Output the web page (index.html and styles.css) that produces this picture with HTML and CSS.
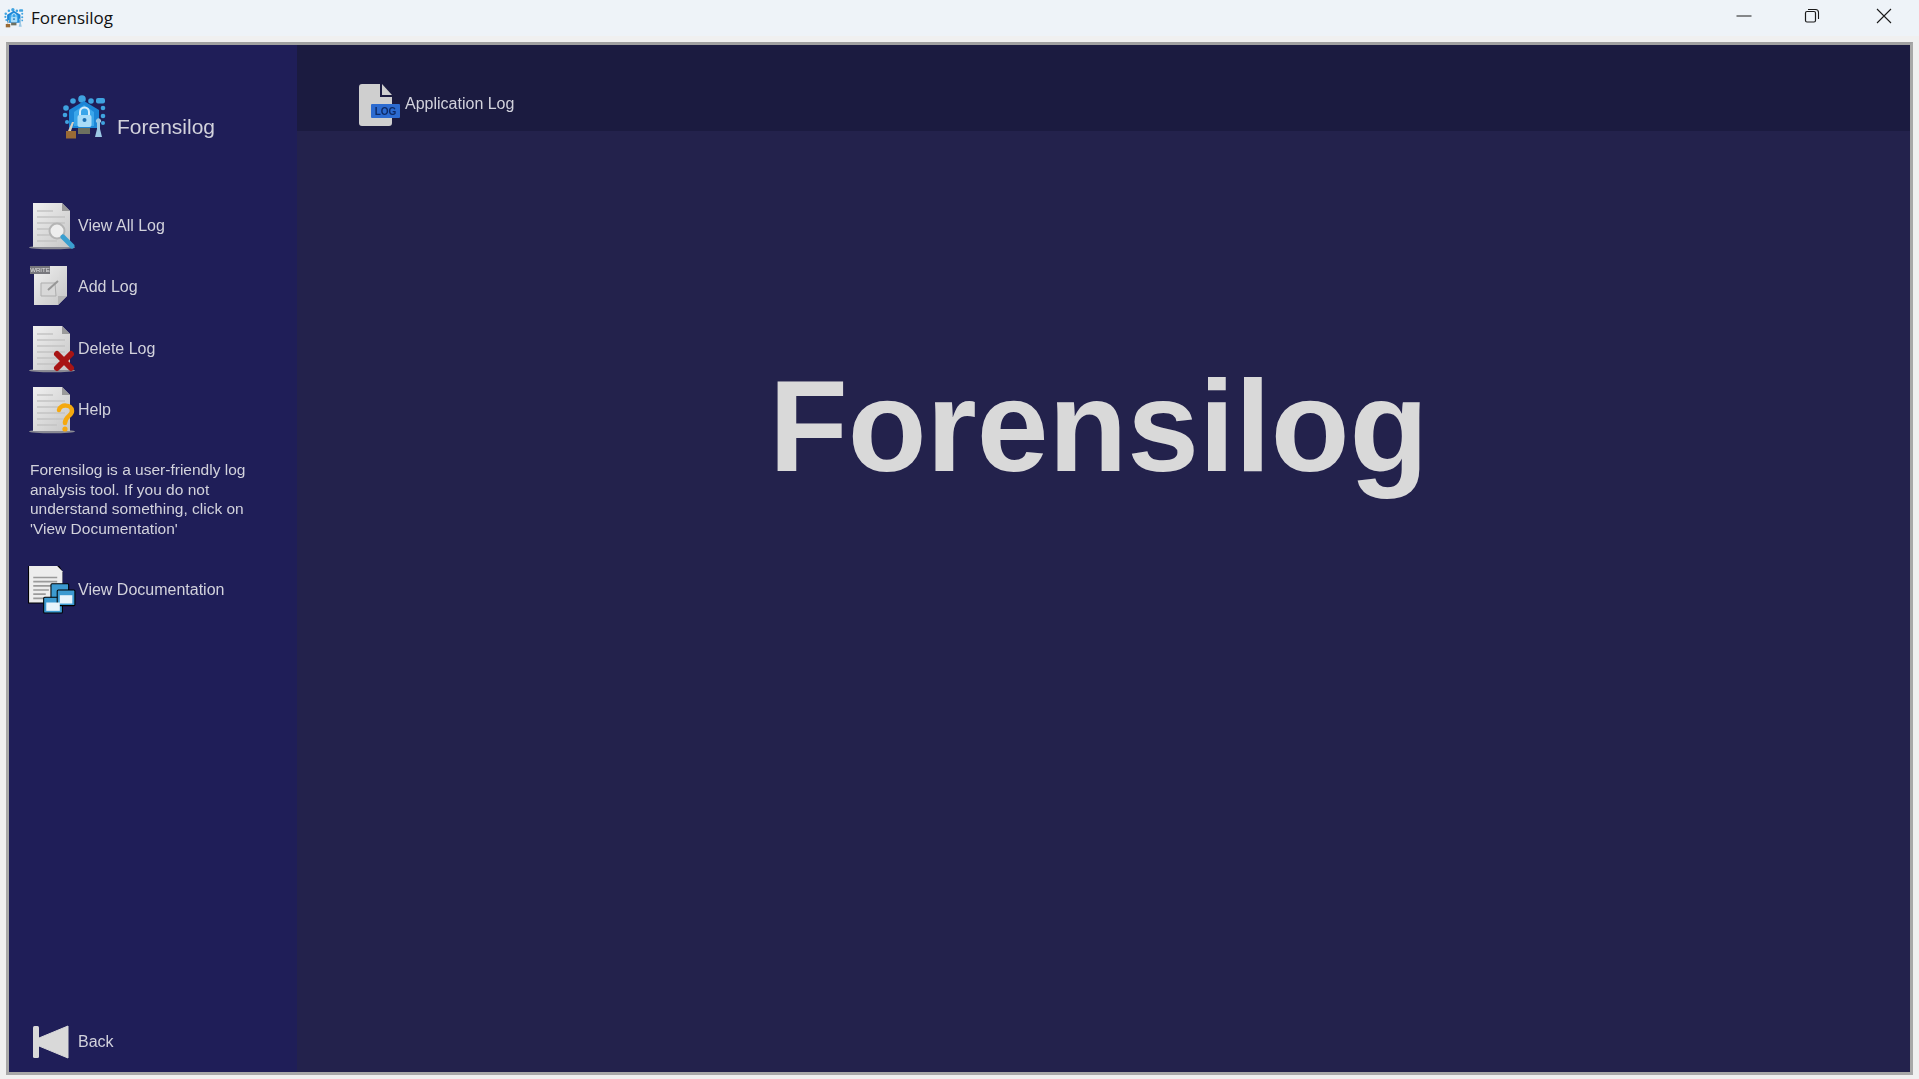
FILE: index.html
```html
<!DOCTYPE html>
<html lang="en">
<head>
    <meta charset="UTF-8">
    <meta name="viewport" content="width=device-width, initial-scale=1.0">
    <title>Forensilog</title>
    <link rel="stylesheet" href="styles.css">
</head>
<body>
    <svg class="defs" width="0" height="0">
        <defs>
            <linearGradient id="paper" x1="0" y1="0" x2="1" y2="1">
                <stop offset="0" stop-color="#f0f0f0"/>
                <stop offset="1" stop-color="#c6c6c6"/>
            </linearGradient>
            <symbol id="sheet" viewBox="0 0 48 48">
                <ellipse cx="24" cy="45.500" rx="23" ry="1.700" fill="#8b8b94"/>
                <path d="M5 1h29l8 8v36H5z" fill="url(#paper)"/>
                <path d="M34 1l8 8h-8z" fill="#9a9a9a"/>
                <path d="M9 9h16M9 15h28M9 21h28M9 27h28M9 33h28M9 39h20" stroke="#c4c4c4" stroke-width="1.300" fill="none"/>
            </symbol>
            <symbol id="logo" viewBox="0 0 45 45">
                <g fill="#3fa3e0">
                    <circle cx="20" cy="4" r="3.800"/><circle cx="11" cy="6" r="2.800"/><circle cx="29" cy="6" r="2.800"/>
                    <rect x="34" y="3" width="9" height="5.500" rx="2"/><circle cx="4" cy="13" r="2.800"/><circle cx="3" cy="20" r="2.300"/>
                    <circle cx="41" cy="13" r="2.300"/><circle cx="41" cy="21" r="2.300"/><circle cx="5" cy="27" r="2"/><circle cx="41" cy="28" r="2"/>
                </g>
                <path d="M7 15L22 6l15 9v18H7z" fill="#1c86d6"/>
                <path d="M12 17l10-7 10 7v14H12z" fill="#3aa6ea"/>
                <path d="M18 20v-3a4.500 4.500 0 0 1 9 0v3" stroke="#d5ecfa" stroke-width="2" fill="none"/>
                <rect x="15.500" y="20" width="14" height="12" rx="2" fill="#a8dcf8"/>
                <circle cx="22.500" cy="25" r="2" fill="#1c6fb2"/>
                <rect x="16" y="33" width="12" height="6" fill="#6d7060"/>
                <path d="M4 36h10v7.500H4z" fill="#9a6b35"/>
                <path d="M6 36l4-9h2l-3 9z" fill="#d8d0c0"/>
                <path d="M33 42h7l-2-8v-6a2.500 2.500 0 1 0-3 0v6z" fill="#9cc8e4"/>
            </symbol>
        </defs>
    </svg>

    <div class="titlebar">
        <svg class="title-icon" width="20" height="20"><use href="#logo"/></svg>
        <span class="title-text">Forensilog</span>
        <div class="controls">
            <div class="control">
                <svg width="16" height="16" viewBox="0 0 16 16"><path d="M0.500 8h15" stroke="#1a1a1a" fill="none"/></svg>
            </div>
            <div class="control restore">
                <svg width="16" height="16" viewBox="0 0 16 16"><rect x="1.500" y="3.500" width="10" height="10.500" rx="1.500" stroke="#1a1a1a" fill="none" stroke-width="1.200"/><path d="M4 1.500h7.500a3 3 0 0 1 3 3V11" stroke="#1a1a1a" fill="none" stroke-width="1.100"/></svg>
            </div>
            <div class="control">
                <svg width="16" height="16" viewBox="0 0 16 16"><path d="M1 1l14 14M15 1L1 15" stroke="#1a1a1a" stroke-width="1.100" fill="none"/></svg>
            </div>
        </div>
    </div>

    <div class="window">
        <aside class="sidebar">
            <div class="brand">
                <svg class="soft-icon" width="45" height="45"><use href="#logo"/></svg>
                <span class="brand-name soft">Forensilog</span>
            </div>

            <div class="nav-row">
                <svg class="nav-icon soft-icon" viewBox="0 0 48 48">
                    <use href="#sheet"/>
                    <circle cx="29" cy="29" r="7.500" fill="#eeeeee" stroke="#b5b5b5" stroke-width="2"/>
                    <path d="M35 35l9 9" stroke="#3a9fd0" stroke-width="5" stroke-linecap="round"/>
                </svg>
                <span class="soft">View All Log</span>
            </div>
            <div class="nav-row">
                <svg class="nav-icon soft-icon" viewBox="0 0 48 48">
                    <path d="M6 3h33v30l-9 9H6z" fill="url(#paper)"/>
                    <path d="M30 42v-9h9z" fill="#b5b5b5"/>
                    <rect x="2" y="3" width="20" height="8" fill="#77777c"/>
                    <text x="12" y="9" class="write-tag">WRITE</text>
                    <path d="M13 20h14l1 13H13z" fill="#d8d8d8" stroke="#adadad"/>
                    <path d="M20 27l10-9" stroke="#979797" stroke-width="2"/>
                </svg>
                <span class="soft">Add Log</span>
            </div>
            <div class="nav-row">
                <svg class="nav-icon soft-icon" viewBox="0 0 48 48">
                    <use href="#sheet"/>
                    <path d="M29 29l14 14M43 29L29 43" stroke="#a81515" stroke-width="6" stroke-linecap="round"/>
                </svg>
                <span class="soft">Delete Log</span>
            </div>
            <div class="nav-row">
                <svg class="nav-icon soft-icon" viewBox="0 0 48 48">
                    <use href="#sheet"/>
                    <path d="M31 24c1-6 13-6 13 1 0 5-7 5-7 12" stroke="#f5a90f" stroke-width="4.500" fill="none" stroke-linecap="round"/>
                    <circle cx="37" cy="43" r="2.600" fill="#f5a90f"/>
                </svg>
                <span class="soft">Help</span>
            </div>

            <p class="about soft">Forensilog is a user-friendly log analysis tool. If you do not understand something, click on 'View Documentation'</p>

            <div class="nav-row">
                <svg class="nav-icon doc-icon soft-icon" viewBox="0 0 48 48">
                    <path d="M1 1h30l3 5v31H1z" fill="#000"/>
                    <path d="M2 1h27l5 5v30H2z" fill="#ededed"/>
                    <path d="M6 12h23M6 16h23M6 20h23M6 24h15M6 28h12M6 32h12" stroke="#9a9a9a" stroke-width="1.600" fill="none"/>
                    <rect x="23" y="18" width="17" height="15" rx="1" fill="#3c9ad0" stroke="#000"/>
                    <rect x="16" y="31" width="18" height="15" rx="1" fill="#3c9ad0" stroke="#000"/>
                    <rect x="29" y="24" width="17" height="15" rx="1" fill="#3c9ad0" stroke="#000"/>
                    <rect x="18.500" y="36" width="13" height="8" fill="#e8f4fb"/>
                    <rect x="31.500" y="29" width="12" height="8" fill="#e8f4fb"/>
                </svg>
                <span class="soft">View Documentation</span>
            </div>

            <div class="nav-row back">
                <svg class="soft-icon" width="38" height="34" viewBox="0 0 38 34">
                    <rect x="1" y="1" width="6" height="32" rx="1.500" fill="#d9d9d9"/>
                    <path d="M7 13L36 1v32L7 21z" fill="#d9d9d9" stroke="#d9d9d9" stroke-linejoin="round"/>
                </svg>
                <span class="soft">Back</span>
            </div>
        </aside>

        <main class="content">
            <div class="content-head">
                <svg class="soft-icon" width="44" height="44" viewBox="0 0 44 44">
                    <path d="M3 4a3 3 0 0 1 3-3h18v13h12v26a3 3 0 0 1-3 3H6a3 3 0 0 1-3-3z" fill="#cfcfcf"/>
                    <path d="M26 1l10 11H26z" fill="#cfcfcf"/>
                    <rect x="15" y="21" width="29" height="14" rx="1" fill="#2c6bd0"/>
                    <text x="29.500" y="32" class="log-tag">LOG</text>
                </svg>
                <span class="head-label soft">Application Log</span>
            </div>
            <h1 class="big-title soft">Forensilog</h1>
        </main>
    </div>
</body>
</html>
```

FILE: styles.css
```css
* {
    box-sizing: border-box;
}

html, body {
    height: 100%;
}

body {
    margin: 0;
    display: flex;
    flex-direction: column;
    background-color: #f0f0f0;
    font-family: "Liberation Sans", Arial, sans-serif;
    overflow: hidden;
}

.defs {
    position: absolute;
}

.soft {
    filter: blur(0.4px);
}

.soft-icon {
    filter: blur(0.6px);
}

.titlebar {
    height: 36px;
    flex: none;
    display: flex;
    align-items: center;
    padding-left: 4px;
    background-color: #eef3f8;
    color: #111;
}

.title-icon {
    margin-right: 7px;
}

.title-text {
    font-family: "Open Sans", sans-serif;
    font-size: 17px;
    margin-top: -2px;
}

.controls {
    margin-left: auto;
    display: flex;
    margin-top: -5px;
}

.control {
    width: 70px;
    display: flex;
    justify-content: center;
}

.restore svg {
    margin-left: -4px;
}

.window {
    flex: 1;
    display: flex;
    margin: 6px 6px 4px 6px;
    border: 3px solid;
    border-color: #a0a0a0 #a8a8a8 #a8a8a8 #a8a8a8;
    min-height: 0;
}

.sidebar {
    width: 288px;
    flex: none;
    display: flex;
    flex-direction: column;
    padding: 50px 0 0 19px;
    background-color: #1f1e58;
    color: #d2d2dc;
    font-size: 16px;
}

.brand {
    display: flex;
    align-items: flex-end;
    gap: 10px;
    padding-left: 34px;
    margin-bottom: 55px;
}

.brand-name {
    font-size: 21px;
    line-height: 24px;
    margin-bottom: 1px;
}

.nav-row {
    height: 61.500px;
    display: flex;
    align-items: center;
    gap: 2px;
}

.nav-icon {
    width: 48px;
    height: 48px;
}

.doc-icon {
    flex: none;
    width: 50px;
    height: 50px;
    margin: 0 -1px 0 -1px;
}

.about {
    margin: 19px 0 0 2px;
    width: 232px;
    font-size: 15.500px;
    line-height: 19.600px;
}

.about + .nav-row {
    margin-top: 21px;
}

.back {
    margin-top: auto;
    height: 60px;
    padding-left: 4px;
    gap: 8px;
}

.content {
    flex: 1;
    display: flex;
    flex-direction: column;
    background-color: #23224c;
    min-width: 0;
}

.content-head {
    height: 86px;
    display: flex;
    align-items: center;
    gap: 5px;
    padding: 34px 0 0 59px;
    background-color: #1b1b40;
    color: #d2d2dc;
    font-size: 16px;
}

.head-label {
    margin-top: -3px;
}

.log-tag {
    font-family: "Liberation Sans", sans-serif;
    font-size: 10px;
    font-weight: bold;
    fill: #0d2a66;
    text-anchor: middle;
}

.write-tag {
    font-family: "Liberation Sans", sans-serif;
    font-size: 6px;
    fill: #e0e0e0;
    text-anchor: middle;
}

.big-title {
    margin: 220px 0 0 472px;
    font-size: 129px;
    line-height: 150px;
    font-weight: bold;
    color: #d9d9d9;
}
```
